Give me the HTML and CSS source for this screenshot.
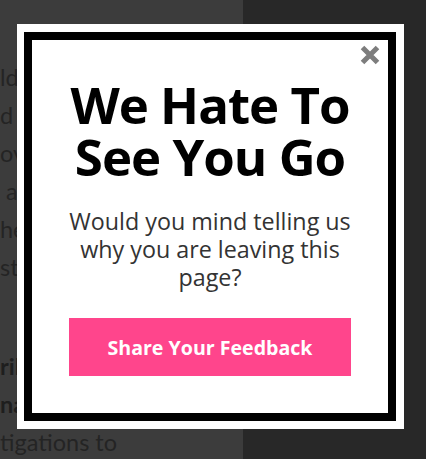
FILE: index.html
```html
<!DOCTYPE html>
<html lang="en">
<head>
<meta charset="utf-8">
<title>We Hate To See You Go</title>
<link rel="stylesheet" href="styles.css">
</head>
<body>
<div class="page">
  <div class="page-col">
    <div class="para">
      <p class="line">ld</p>
      <p class="line">d y</p>
      <p class="line">ov</p>
      <p class="line"> a</p>
      <p class="line">he</p>
      <p class="line">st</p>
    </div>
    <div class="para para-bold">
      <p class="line">ril</p>
      <p class="line">na</p>
    </div>
    <div class="para para-last">
      <p class="line">tigations to</p>
    </div>
  </div>
  <div class="page-rest"></div>
</div>

<div class="modal">
  <div class="frame">
    <button class="close" aria-label="Close">
      <svg width="20" height="20" viewBox="0 0 20 20">
        <path d="M2.5 2.5 L17.5 17.5 M17.5 2.5 L2.5 17.5" stroke="#7d7d7d" stroke-width="5" stroke-linecap="butt"/>
      </svg>
    </button>
    <h1 class="title">We Hate To<br>See You Go</h1>
    <p class="subtitle">Would you mind telling us<br>why you are leaving this<br>page?</p>
    <a class="cta" href="#">Share Your Feedback</a>
  </div>
</div>
</body>
</html>
```
FILE: styles.css
```css
html, body {
  margin: 0;
  padding: 0;
}
body {
  width: 426px;
  height: 459px;
  overflow: hidden;
  position: relative;
  background: #282828;
}
.page {
  display: flex;
  height: 459px;
}
.page-col {
  width: 243px;
  background: #3c3c3c;
  color: #242424;
  font-family: Lato, "Liberation Sans", sans-serif;
  font-size: 23.5px;
  line-height: 38px;
  padding-top: 58px;
  overflow: hidden;
}
.page-rest {
  flex: 1;
  background: #282828;
}
.line {
  margin: 0;
  white-space: pre;
}
.para-bold {
  margin-top: 61px;
  font-weight: 700;
  color: #1e1e1e;
}
.para-last {
  margin-top: 0;
}

.modal {
  position: absolute;
  left: 17px;
  top: 24px;
  width: 387px;
  height: 405px;
  box-sizing: border-box;
  background: #fff;
  padding: 8px 8px 8px 7px;
}
.frame {
  position: relative;
  height: 100%;
  box-sizing: border-box;
  border: 8px solid #000;
  background: #fff;
  display: flex;
  flex-direction: column;
  align-items: center;
  font-family: "Open Sans", "Liberation Sans", sans-serif;
  text-align: center;
}
.close {
  position: absolute;
  top: 5px;
  right: 8px;
  width: 20px;
  height: 20px;
  padding: 0;
  border: 0;
  background: none;
  display: block;
}
.close svg {
  display: block;
}
.title {
  margin: 38px 0 0;
  font-size: 51px;
  line-height: 52px;
  letter-spacing: -1px;
  font-weight: 700;
  color: #000;
}
.subtitle {
  margin: 25px 0 0;
  font-size: 23.3px;
  line-height: 28px;
  color: #333;
}
.cta {
  margin-top: 27px;
  width: 282px;
  height: 58px;
  background: #ff458c;
  color: #fff;
  font-size: 19.6px;
  font-weight: 700;
  text-decoration: none;
  display: flex;
  align-items: center;
  justify-content: center;
}
```
